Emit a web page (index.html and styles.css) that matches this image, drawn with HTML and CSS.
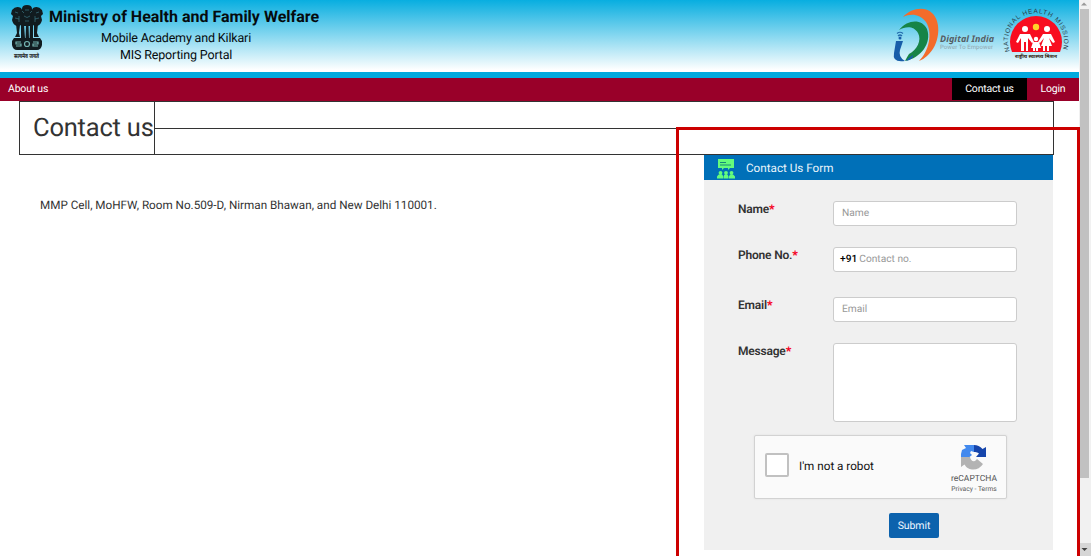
FILE: index.html
```html
<!DOCTYPE html>
<html lang="en">
<head>
<meta charset="utf-8">
<title>Contact us</title>
<link rel="stylesheet" href="styles.css">
</head>
<body>
<div class="page">
  <header class="banner">
    <svg class="emblem" viewBox="0 0 34 56" aria-label="State emblem">
      <g fill="#111c20">
        <path d="M12 5Q12 1 17 1T22 5L25 9 24 18 22 22H12L10 18 9 9Z"/>
        <path d="M11 4Q6 1 2 6L1 10 3 12 2 16Q3 21 7 22L12 21 13 8ZM23 4Q28 1 32 6L33 10 31 12 32 16Q31 21 27 22L22 21 21 8Z"/>
        <path d="M6 20L10 21 9 29 10 33H5L7 29ZM11 21H14L15 34H11ZM16 21H18.500L19 34H15.500ZM20 21H23L23 34H19.500ZM24 21L28 20 27 29 29 33H24Z"/>
        <path d="M4 34H30L32 37V41Q31 46 27 46H7Q3 46 2 41V37Z"/>
      </g>
      <g fill="none" stroke="#4a98aa" stroke-width=".5">
        <path d="M12 7L14 9M22 7L20 9M15 6H19M14 12Q17 15 20 12M5 8L8 9M29 8L26 9M5 14L9 15M29 14L25 15M15 17H19M9 12V18M25 12V18"/>
      </g>
      <g fill="none" stroke="#75b5b2" stroke-width="1.200">
        <path d="M11 38H6V40H11V42H6M23 38H28V40H23V42H28"/><circle cx="17" cy="40" r="2.500"/>
      </g>
      <text x="4" y="54" class="emblem-motto" textLength="25" lengthAdjust="spacingAndGlyphs">सत्यमेव जयते</text>
    </svg>
    <div class="titles">
      <h1>Ministry of Health and Family Welfare</h1>
      <p class="sub-one">Mobile Academy and Kilkari</p>
      <p class="sub-two">MIS Reporting Portal</p>
    </div>
    <svg class="digital" viewBox="0 0 104 56" aria-label="Digital India">
      <path fill="#f36c2b" d="M10 9C18 0 32-2 39 5C49 14 47 37 34 48Q31 51 26 53C36 43 40 25 33 14C27 6 18 5 10 9Z"/>
      <path fill="#168447" d="M6 22C15 11 29 11 34 21C39 35 28 50 12 53Q14 49 16 46C24 42 29 32 25 25C21 18 13 18 6 22Z"/>
      <path fill="#175da9" d="M3 33H10L7 42Q5 49 12 53Q-1 55 1 45ZM13 53Q15 50 20 47Q21 51 13 53Z"/>
      <g fill="none" stroke="#226aab" stroke-width="1.200"><path d="M5 28Q7 26 9 28M4 25.500Q7 23 10 25.500"/></g><circle cx="7" cy="30" r="1.500" fill="#175da9"/>
      <text x="47" y="33.500" class="digital-name" textLength="54">Digital India</text>
      <text x="47" y="40.500" class="digital-line" textLength="53">Power To Empower</text>
    </svg>
    <svg class="mission" viewBox="0 0 68 54" aria-label="National Health Mission">
      <defs><path id="ring" d="M8.200 44A28 28 0 1 1 59.800 44"/><clipPath id="disc"><path d="M0 0H68V44H0Z"/></clipPath></defs>
      <circle cx="34" cy="34" r="26" fill="#f80d20" clip-path="url(#disc)"/>
      <circle cx="34" cy="19" r="3.200" fill="#ffd329"/>
      <g fill="#fff">
        <circle cx="23" cy="21" r="3"/><path d="M18 26H28L32 34 30 35 26 30V43H24V34H22V43H19V30L16 35 14 34Z"/>
        <circle cx="45" cy="21" r="3"/><path d="M41 26H49L53 34 51 35 47 30 50 38H47V43H45V38H43V43H41V38H39L42 30 38 35 36 34Z"/>
        <circle cx="34" cy="31" r="2.200"/><path d="M31 34H37L39 40H36V43H34V40H33V43H31V40H29Z"/>
      </g>
      <text class="mission-ring" textLength="106"><textPath href="#ring" startOffset="1">NATIONAL HEALTH MISSION</textPath></text>
      <text x="13" y="50" class="mission-motto" textLength="42" lengthAdjust="spacingAndGlyphs">राष्ट्रीय स्वास्थ्य मिशन</text>
    </svg>
  </header>
  <nav class="nav">
    <a class="nav-about">About us</a>
    <a class="nav-contact">Contact us</a>
    <a class="nav-login">Login</a>
  </nav>
  <main class="content">
    <div class="heading">
      <h2>Contact us</h2>
      <div class="heading-lines"><span></span><span></span></div>
    </div>
    <div class="columns">
      <p class="address">MMP Cell, MoHFW, Room No.509-D, Nirman Bhawan, and New Delhi 110001.</p>
      <section class="panel">
        <div class="panel-head">
          <svg class="people" viewBox="0 0 18 20"><g fill="#64fb7c"><path d="M1 0H17V9H13L11 11V9H7L5 11V9H1Z"/><circle cx="3.500" cy="13.800" r="1.900"/><circle cx="9" cy="13.800" r="1.900"/><circle cx="14.500" cy="13.800" r="1.900"/><path d="M0 19.500V17.500Q1 15 3.500 15T6 17.500V19.500ZM6.500 19.500V17.500Q7 15 9 15T11.500 17.500V19.500ZM12 19.500V17.500Q12.500 15 14.500 15T18 17.500V19.500Z"/></g><path d="M3 3.500H9M3 6H14" stroke="#168a79" stroke-width="1"/></svg>
          <span>Contact Us Form</span>
        </div>
        <form class="form">
          <div class="row row-name"><label>Name<b>*</b></label><div class="field">Name</div></div>
          <div class="row row-phone"><label>Phone No.<b>*</b></label><div class="field field-phone"><strong>+91</strong>Contact no.</div></div>
          <div class="row row-email"><label>Email<b>*</b></label><div class="field">Email</div></div>
          <div class="row row-message"><label>Message<b>*</b></label><div class="field area"></div></div>
          <div class="captcha">
            <span class="check"></span>
            <span class="robot">I'm not a robot</span>
            <div class="brand">
              <svg class="recaptcha" viewBox="0 0 26 26"><path fill="#4289ee" d="M3 1H13V8L10 7 9 9 11 11 8.500 13H0V10L1 6 5 4Z"/><path fill="#1645ab" d="M13 1Q18 1 21.500 5L25 3V13H15L18 9.500Q16 7.500 13 8Z"/><path fill="#b3b3b3" d="M0 13H9Q10 18 14 17L16 15 22 20Q18 26 11 25.500 6 25 3.500 20.500L0 23Z"/></svg>
              <span class="brand-name">reCAPTCHA</span>
              <span class="brand-links">Privacy - Terms</span>
            </div>
          </div>
          <div class="actions"><span class="submit">Submit</span></div>
        </form>
      </section>
    </div>
  </main>
</div>
<div class="scrollbar">
  <svg viewBox="0 0 12 9"><path d="M2 5.500L5 2.500 8 5.500Z" fill="#999"/></svg>
  <div class="thumb"></div>
  <div class="down"><svg viewBox="0 0 12 13"><path d="M2.500 5H8.500L5.500 8Z" fill="#444"/></svg></div>
</div>
<div class="highlight"></div>
</body>
</html>
```
FILE: styles.css
```css
* { box-sizing: border-box; }
body { margin: 0; width: 1091px; height: 556px; overflow: hidden; position: relative; display: flex; background: #fff; font-family: Roboto, "Liberation Sans", sans-serif; color: #333; text-rendering: geometricPrecision; }
h1, h2, p { margin: 0; font-weight: 400; }
svg { display: block; flex: none; overflow: visible; }
.page { width: 1079px; height: 556px; }
.banner { height: 78px; display: flex; align-items: flex-start; background: linear-gradient(#08aee0, #fff 70px, #fff 72px, #00aade 72px); }
.emblem { width: 34px; height: 56px; margin: 4px 0 0 10px; }
.emblem-motto { font: bold 6px "Noto Sans", sans-serif; fill: #111; }
.titles { width: 272px; margin-left: 5px; color: #050b0e; white-space: nowrap; }
.titles h1 { margin-top: 7px; font-size: 16px; line-height: 20px; font-weight: 700; }
.titles p { font-size: 12.5px; letter-spacing: -0.16px; }
.sub-one { margin: 3px 0 0 52px; line-height: 17px; }
.sub-two { margin-left: 71px; line-height: 17px; }
.digital { width: 104px; height: 56px; margin: 8px 0 0 auto; }
.digital-name { font: italic 700 9px "Noto Sans", sans-serif; fill: #555f65; }
.digital-line { font: 6px Roboto, sans-serif; fill: #90a5ae; }
.mission { width: 68px; height: 54px; margin: 8px 9px 0 5px; }
.mission-ring { font: 6.5px "Liberation Sans", sans-serif; fill: #29404a; }
.mission-motto { font: bold 5px "Noto Sans", sans-serif; fill: #321; }
.nav { height: 23px; display: flex; align-items: stretch; background: #990029; color: #fff; font-size: 10.5px; letter-spacing: -0.2px; line-height: 22px; }
.nav-about { margin-left: 8px; }
.nav-contact { width: 75px; height: 22px; margin-left: auto; background: #000; text-align: center; }
.nav-login { width: 52px; text-align: center; }
.content { width: 1035px; margin-left: 19px; }
.heading { height: 54px; display: flex; border: 1px solid #333; }
.heading h2 { width: 135px; padding-left: 13px; border-right: 1px solid #333; font-size: 25.5px; letter-spacing: -0.2px; line-height: 52px; white-space: nowrap; }
.heading-lines { flex: 1; display: grid; grid-template-rows: 27px 1fr; }
.heading-lines span:first-child { border-bottom: 1px solid #333; }
.columns { display: flex; align-items: flex-start; justify-content: space-between; }
.address { margin: 41px 0 0 21px; font-size: 11.7px; line-height: 18px; white-space: nowrap; }
.panel { width: 349px; height: 395px; margin-right: 1px; background: #f0f0f0; }
.panel-head { height: 25px; display: flex; align-items: center; gap: 11px; padding-left: 13px; background: #0070b8; color: #e8f4fb; font-size: 11.7px; }
.people { width: 18px; height: 20px; margin-top: 3px; }
.form { padding: 21px 36px 0 34px; }
.row { display: flex; justify-content: space-between; }
.row label { font-size: 12px; letter-spacing: -0.2px; line-height: 17px; font-weight: 600; }
.row b { color: #f5001d; }
.field { width: 184px; height: 25px; padding-left: 8px; border: 1px solid #ccc; border-radius: 3px; background: #fff; color: #999; font-size: 10.2px; line-height: 23px; }
.field-phone { padding-left: 6px; }
.field strong { margin-right: 2px; color: #000; font-weight: 500; }
.row-name { height: 46px; }
.row-phone { height: 50px; }
.row-email { height: 46px; }
.area { height: 79px; }
.captcha { width: 253px; height: 64px; margin: 13px 0 0 16px; display: flex; align-items: center; border: 1px solid #d2d2d2; border-radius: 2px; background: #fafafa; box-shadow: 0 0 2px #ddd; }
.check { width: 24px; height: 24px; margin: 0 10px 4px 10px; border: 2px solid #c1c1c1; border-radius: 2px; background: #fff; }
.robot { margin-bottom: 2px; font-size: 11.7px; color: #111; }
.brand { width: 54px; height: 62px; margin: 0 5px 0 auto; display: flex; flex-direction: column; align-items: center; color: #555; white-space: nowrap; }
.recaptcha { width: 26px; height: 26px; margin-top: 8px; }
.brand-name { margin-top: 3px; font-size: 8.5px; line-height: 12px; }
.brand-links { font-size: 6.7px; line-height: 8px; }
.actions { padding: 14px 0 0 151px; }
.submit { display: block; width: 50px; height: 25px; border-radius: 2px; background: #0c62ad; color: #edf6ff; font-size: 10.5px; letter-spacing: -0.1px; line-height: 25px; text-align: center; }
.scrollbar { width: 12px; height: 556px; display: flex; flex-direction: column; background: #f1f1f1; }
.scrollbar svg { width: 12px; height: 9px; }
.thumb { width: 9px; height: 469px; margin-left: 1px; background: #c1c1c1; }
.down { height: 13px; margin-top: auto; background: #d6d6d6; }
.down svg { height: 13px; }
.highlight { position: absolute; left: 676px; top: 127px; width: 404px; height: 440px; border: 3px solid #cc0000; }
```
